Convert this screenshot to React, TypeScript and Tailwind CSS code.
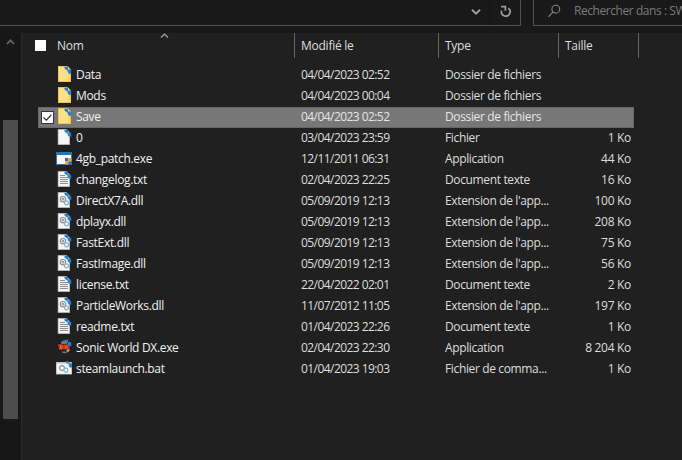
type FileKind = "folder" | "blank" | "exe" | "text" | "dll" | "sonic" | "bat";

type FileItem = {
  name: string;
  date: string;
  type: string;
  size?: string;
  kind: FileKind;
};

const files: FileItem[] = [
  { name: "Data", date: "04/04/2023 02:52", type: "Dossier de fichiers", kind: "folder" },
  { name: "Mods", date: "04/04/2023 00:04", type: "Dossier de fichiers", kind: "folder" },
  { name: "Save", date: "04/04/2023 02:52", type: "Dossier de fichiers", kind: "folder" },
  { name: "0", date: "03/04/2023 23:59", type: "Fichier", size: "1 Ko", kind: "blank" },
  { name: "4gb_patch.exe", date: "12/11/2011 06:31", type: "Application", size: "44 Ko", kind: "exe" },
  { name: "changelog.txt", date: "02/04/2023 22:25", type: "Document texte", size: "16 Ko", kind: "text" },
  { name: "DirectX7A.dll", date: "05/09/2019 12:13", type: "Extension de l'app...", size: "100 Ko", kind: "dll" },
  { name: "dplayx.dll", date: "05/09/2019 12:13", type: "Extension de l'app...", size: "208 Ko", kind: "dll" },
  { name: "FastExt.dll", date: "05/09/2019 12:13", type: "Extension de l'app...", size: "75 Ko", kind: "dll" },
  { name: "FastImage.dll", date: "05/09/2019 12:13", type: "Extension de l'app...", size: "56 Ko", kind: "dll" },
  { name: "license.txt", date: "22/04/2022 02:01", type: "Document texte", size: "2 Ko", kind: "text" },
  { name: "ParticleWorks.dll", date: "11/07/2012 11:05", type: "Extension de l'app...", size: "197 Ko", kind: "dll" },
  { name: "readme.txt", date: "01/04/2023 22:26", type: "Document texte", size: "1 Ko", kind: "text" },
  { name: "Sonic World DX.exe", date: "02/04/2023 22:30", type: "Application", size: "8 204 Ko", kind: "sonic" },
  { name: "steamlaunch.bat", date: "01/04/2023 19:03", type: "Fichier de comma...", size: "1 Ko", kind: "bat" },
];

// Two small blue arrows shown on compressed files
function CompressedMark() {
  return (
    <g fill="#2480d2">
      <path d="M7.5.8h3.5v3.4H9.6L7.5 2.4z" />
      <path d="M10.6 3.6h2.8l.8 1.2v3h-2.2L10.6 6z" />
    </g>
  );
}

function Gears() {
  return (
    <g fill="none">
      <circle cx="6" cy="7.2" r="2.7" stroke="#87919a" strokeWidth="1.1" />
      <circle cx="6" cy="7.2" r="0.9" stroke="#6f7b84" strokeWidth="0.9" />
      <circle cx="9.5" cy="10.8" r="2" stroke="#86b4d0" strokeWidth="1.2" />
    </g>
  );
}

function FileIcon({ kind }: { kind: FileKind }) {
  const isPage = kind === "blank" || kind === "text" || kind === "dll";

  return (
    <svg className="h-4 w-4 shrink-0 overflow-visible" viewBox="0 0 16 16">
      {kind === "folder" && (
        <>
          <path d="M1 0h9.5L14 3.5V16H1z" fill="#f0c548" />
          <path d="M2 1h9.5v14H2z" fill="#fbe08a" />
          <path d="M11.5 9.5L13 8v7h-1.5z" fill="#f7d877" />
          <CompressedMark />
        </>
      )}
      {isPage && (
        <>
          <path d="M.7 0h8.8L13 3.5V16H.7z" fill="#9d9d9d" />
          <path d="M1.4.7h7.9L12.3 4v11.3H1.4z" fill="#f5f5f5" />
        </>
      )}
      {kind === "text" && (
        <path d="M3 4.5h5M3 6.5h8M3 8.5h8M3 10.5h8M3 12.5h8" stroke="#858c92" />
      )}
      {kind === "dll" && <Gears />}
      {isPage && <CompressedMark />}
      {kind === "exe" && (
        <>
          <path d="M-1 2h16v13H-1z" fill="#2476b4" />
          <path d="M0 5h14v9H0z" fill="#f8f8f8" />
          <path d="M8 8h3.2v3.2H8zM11.2 11.2h3.3v3.3h-3.3z" fill="#2f6fb4" />
          <path d="M11.2 8h3.3v3.2h-3.3zM8 11.2h3.2v3.3H8z" fill="#eda637" />
        </>
      )}
      {kind === "sonic" && (
        <>
          <circle cx="7.5" cy="8" r="6.4" fill="#131a24" />
          <path d="M3.5 4c1-3 6-4 8-1l-2 2H5zM4 12.5c2 2.4 5.5 2.4 7.5 0z" fill="#63788a" />
          <path d="M10.5 9.5l2.5 1-1.6 2.4-2-1z" fill="#aebcc6" />
          <path d="M1 5l6 .4L12.4 5l.4 5.8-5.3-.3L2 11z" fill="#b93216" />
          <path
            d="M3.5 6.4v3.2c2.6 0 2.6-3.2 0-3.2zM7.7 6.4l3.3 3.2M11 6.4L7.7 9.6"
            stroke="#f07134"
            fill="none"
          />
          <path d="M8 .8h3v2.6H9.5zM11 3h2.5l.7 1.6v2.6h-1.8L11 5.6z" fill="#2480d2" />
        </>
      )}
      {kind === "bat" && (
        <>
          <path d="M-1 2h16v12.5H-1z" fill="#a9b3ba" />
          <path d="M-.3 4h14.6v9.8H-.3z" fill="#f5f5f5" />
          <path d="M-.3 2.7h12v1.2h-12z" fill="#dce2e6" />
          <circle cx="5" cy="8" r="2.4" fill="none" stroke="#87919a" strokeWidth="1.1" />
          <circle cx="8.8" cy="10.2" r="2" fill="none" stroke="#86b4d0" strokeWidth="1.2" />
          <path d="M8.6 1.2h3v2.6H10zM11.8 3.6H15v3.8h-2l-1.2-1.6z" fill="#2480d2" />
        </>
      )}
    </svg>
  );
}

function TopBar() {
  return (
    <div className="flex h-[33px] shrink-0 items-start bg-[#191919]">
      <div className="flex h-[26px] w-[521px] shrink-0 border-r border-b border-[#535353]">
        <div className="flex-1" />
        <div className="flex w-[29px] border-r border-[#141414] pt-2 pl-[10px]">
          <svg className="h-2 w-[10px]" viewBox="0 0 10 8">
            <path d="M1 1.7l4 4 4-4" fill="none" stroke="#9b9b9b" strokeWidth="2" />
          </svg>
        </div>
        <div className="flex w-[30px] pt-[5px] pl-[10px]">
          <svg className="h-3 w-3" viewBox="0 0 12 12">
            <g fill="none" stroke="#9b9b9b" strokeWidth="1.7">
              <path d="M1.7 5.4A4.3 4.3 0 1 0 8.3 3.3" />
              <path d="M1 1.6h4.4v4.2" />
            </g>
          </svg>
        </div>
      </div>
      <div className="ml-3 flex h-[26px] flex-1 items-start overflow-hidden border-b border-l border-[#535353]">
        <svg className="mt-1 ml-[13px] h-[14px] w-[14px] shrink-0" viewBox="0 0 14 14">
          <g fill="none" stroke="#858585" strokeWidth="1.1">
            <circle cx="8.8" cy="5.2" r="3.9" />
            <path d="M6 8L1.3 12.8" />
          </g>
        </svg>
        <span className="ml-[13px] pt-[2px] tracking-[-0.44px] whitespace-nowrap text-[#7b7b7b]">
          Rechercher dans : SW
        </span>
      </div>
    </div>
  );
}

function Scrollbar() {
  return (
    <div className="flex w-[21px] shrink-0 flex-col bg-[#171717] pl-[3px]">
      <svg className="mt-[6px] ml-[3px] h-[6px] w-[9px]" viewBox="0 0 9 6">
        <path d="M1 5l3.5-3.7L8 5" fill="none" stroke="#686868" strokeWidth="1.7" />
      </svg>
      <div className="mt-[75px] h-[299px] w-[15px] bg-[#4d4d4d]" />
    </div>
  );
}

function HeaderRow() {
  return (
    <div className="flex h-[25px] items-stretch tracking-[-0.25px] text-[#dedede]">
      <div className="relative flex w-[273px] items-start border-r border-[#636363] pl-[13px]">
        <span className="mt-[7px] h-[11px] w-[11px] bg-white" />
        <span className="ml-[11px] pt-[4px]">Nom</span>
        <svg className="absolute top-0 left-[138px] h-[5px] w-[9px]" viewBox="0 0 9 5">
          <path d="M1 4.5L4.5 1 8 4.5" fill="none" stroke="#a3a3a3" strokeWidth="1.2" />
        </svg>
      </div>
      <div className="w-[144px] border-r border-[#636363] pt-[4px] pl-[6px]">
        Modifié le
      </div>
      <div className="w-[120px] border-r border-[#636363] pt-[4px] pl-[6px]">Type</div>
      <div className="w-[80px] border-r border-[#636363] pt-[4px] pl-[6px]">Taille</div>
    </div>
  );
}

function FileRow({ file, selected }: { file: FileItem; selected: boolean }) {
  return (
    <div
      className={
        selected
          ? "ml-4 flex h-[21px] w-[596px] items-start border border-[#666666] bg-[#777777] pl-[2px] text-[#e6e6e6]"
          : "ml-4 flex h-[21px] w-[596px] items-start border border-transparent pl-[2px] text-[#dedede]"
      }
    >
      <div className="w-4 shrink-0 pt-[3px]">
        {selected && (
          <svg className="h-[13px] w-[13px]" viewBox="0 0 13 13">
            <rect x="0.5" y="0.5" width="12" height="12" fill="white" stroke="#353535" />
            <path d="M2.5 6.3l2.8 2.8 5-5.2" fill="none" stroke="#222" strokeWidth="1.2" />
          </svg>
        )}
      </div>
      <FileIcon kind={file.kind} />
      <span className="ml-[3px] w-[225px] shrink-0 tracking-[-0.32px] text-[#f2f2f2]">
        {file.name}
      </span>
      <span className="w-[144px] shrink-0 tracking-[-0.56px]">{file.date}</span>
      <span className="w-[110px] shrink-0 tracking-[-0.36px] whitespace-nowrap">
        {file.type}
      </span>
      <span className="flex-1 pr-[2px] text-right tracking-[-0.3px] whitespace-nowrap">
        {file.size}
      </span>
    </div>
  );
}

export default function App() {
  return (
    <div className="flex h-[460px] w-[682px] flex-col overflow-hidden bg-[#202020] font-['Open_Sans',sans-serif] text-[12px] leading-[17px]">
      <TopBar />
      <div className="flex min-h-0 flex-1">
        <Scrollbar />
        <div className="flex-1 border-l border-[#2b2b2b]">
          <HeaderRow />
          <div className="pt-[7px]">
            {files.map((file) => (
              <FileRow key={file.name} file={file} selected={file.name === "Save"} />
            ))}
          </div>
        </div>
      </div>
    </div>
  );
}
